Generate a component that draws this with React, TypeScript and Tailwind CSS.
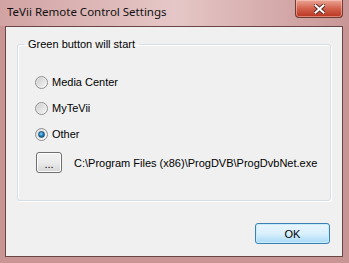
import React from "react";

const font = "font-['Liberation_Sans',Arial,sans-serif]";

const Radio = ({ label, checked }: { label: string; checked?: boolean }) => (
  <div className="flex h-[16px] items-center gap-[4px]">
    <div className="flex h-[13px] w-[13px] items-center justify-center rounded-full border border-[#8f8f8f] bg-gradient-to-br from-[#dcdcdc] to-[#fbfbfb]">
      {checked ? (
        <div className="h-[7px] w-[7px] rounded-full border border-[#1b4d6e] bg-[radial-gradient(circle_at_40%_35%,#7fd0f5,#1a7ab8_55%,#0d4a73)]" />
      ) : (
        <div className="h-[9px] w-[9px] rounded-full bg-gradient-to-br from-[#cfcfcf] to-[#f4f4f4]" />
      )}
    </div>
    <span>{label}</span>
  </div>
);

export default function App() {
  return (
    <div
      className={`${font} flex h-[263px] w-[349px] flex-col overflow-hidden bg-[#c99494] text-[11px] leading-[16px] text-black`}
    >
      <div className="flex h-[26px] shrink-0 items-start bg-gradient-to-r from-[#d2a3a3] via-[#e6c7c7] to-[#c89696]">
        <span className="whitespace-nowrap pl-[7px] pt-[4px] font-['Noto_Sans',sans-serif] text-[11.5px] text-[#111]">
          TeVii Remote Control Settings
        </span>
        <div className="ml-auto mr-[6px] flex h-[18px] w-[48px] items-center justify-center rounded-b-[4px] border border-t-0 border-[#6e3a33] bg-gradient-to-b from-[#e9a596] via-[#d3624d] to-[#b8321c] shadow-[inset_0_0_0_1px_rgba(255,210,200,0.5)]">
          <svg width="11" height="10" viewBox="0 0 11 10">
            <path
              d="M1.5 1.5 L9.5 8.5 M9.5 1.5 L1.5 8.5"
              stroke="#5a2a22"
              strokeWidth="4"
              strokeLinecap="square"
            />
            <path
              d="M1.5 1.5 L9.5 8.5 M9.5 1.5 L1.5 8.5"
              stroke="#ffffff"
              strokeWidth="2"
              strokeLinecap="square"
            />
          </svg>
        </div>
      </div>
      <div className="ml-[5px] mr-[6px] flex h-[231px] flex-col border border-[#6a4545] bg-[#f0f0f0]">
        <fieldset className="ml-[11px] mt-[9px] w-[314px] rounded-[3px] border border-[#d5dfe5] pb-[27px] shadow-[inset_1px_1px_0_#fff,1px_1px_0_#fff]">
          <legend className="ml-[6px] px-[4px] whitespace-nowrap">Green button will start</legend>
          <div className="mt-[22px] flex flex-col gap-[10px] pl-[17px]">
            <Radio label="Media Center" />
            <Radio label="MyTeVii" />
            <Radio label="Other" checked />
          </div>
          <div className="mt-[10px] flex items-center gap-[12px] pl-[18px]">
            <button className="flex h-[21px] w-[26px] shrink-0 items-end justify-center rounded-[3px] border border-[#707070] bg-gradient-to-b from-[#f2f2f2] via-[#ebebeb] to-[#d6d6d6] pb-[3px] text-[11px] leading-[10px] shadow-[inset_0_0_0_1px_#fcfcfc]">
              ...
            </button>
            <span className="whitespace-nowrap">C:\Program Files (x86)\ProgDVB\ProgDvbNet.exe</span>
          </div>
        </fieldset>
        <div className="mr-[12px] mt-[22px] flex justify-end">
          <button className="h-[21px] w-[75px] rounded-[3px] border border-[#3c7fb1] bg-gradient-to-b from-[#eaf6fd] via-[#d9f0fc] to-[#a7d9f5] text-[11px] shadow-[inset_0_0_0_1px_#c7ecfb]">
            OK
          </button>
        </div>
      </div>
    </div>
  );
}
